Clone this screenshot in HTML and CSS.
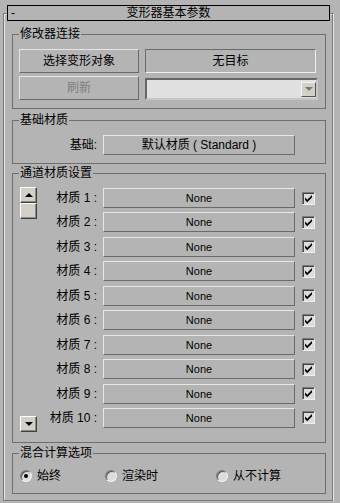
FILE: index.html
```html
<!DOCTYPE html>
<html lang="zh-CN">
<head>
  <meta charset="UTF-8" />
  <meta name="viewport" content="width=device-width, initial-scale=1.0"/>
  <title>变形器基本参数</title>
  <link rel="stylesheet" href="styles.css">
</head>
<body>
  <div class="rollout">
    <div class="rollout-head">
      <span class="minus">-</span>
      <span class="rollout-title">变形器基本参数</span>
      <span></span>
    </div>

    <!-- 修改器连接 -->
    <fieldset class="group group-link">
      <legend>修改器连接</legend>
      <div class="link-grid">
        <button class="btn">选择变形对象</button>
        <button class="btn btn-pick">无目标</button>
        <button class="btn" disabled>刷新</button>
        <div class="dropdown">
          <span class="drop-arrow"><span class="tri tri-down tri-gray"></span></span>
        </div>
      </div>
    </fieldset>

    <!-- 基础材质 -->
    <fieldset class="group group-base">
      <legend>基础材质</legend>
      <div class="base-row">
        <span class="base-label">基础:</span>
        <button class="btn btn-mat">默认材质 ( Standard )</button>
      </div>
    </fieldset>

    <!-- 通道材质设置 -->
    <fieldset class="group group-chan">
      <legend>通道材质设置</legend>
      <div class="chan">
        <div class="scroll">
          <div class="scroll-top">
            <button class="sbtn"><span class="tri tri-up"></span></button>
            <button class="sbtn"></button>
          </div>
          <button class="sbtn"><span class="tri tri-down"></span></button>
        </div>
        <div class="rows" id="rows"></div>
      </div>
    </fieldset>

    <!-- 混合计算选项 -->
    <fieldset class="group group-blend">
      <legend>混合计算选项</legend>
      <div class="blend">
        <label class="radio-item"><span class="radio on"><span class="dot"></span></span>始终</label>
        <label class="radio-item"><span class="radio"></span>渲染时</label>
        <label class="radio-item"><span class="radio"></span>从不计算</label>
      </div>
    </fieldset>
  </div>

  <script>
    // build the 10 channel rows
    const rows = document.getElementById("rows");
    let html = "";
    for (let i = 1; i <= 10; i++) {
      html += `<div class="row">
        <span class="row-label">材质 ${i} :</span>
        <button class="btn btn-none">None</button>
        <span class="check"><svg width="9" height="9" viewBox="0 0 9 9"><path d="M1 3.5 L3.2 5.7 L8 1 L8 3.6 L3.2 8.3 L1 6.1 Z" fill="#000"/></svg></span>
      </div>`;
    }
    rows.innerHTML = html;
  </script>
</body>
</html>
```

FILE: styles.css
```css
body {
  margin: 0;
  background-color: #b4b4b4;
  font-family: "Liberation Sans", "Noto Sans CJK SC", sans-serif;
  font-size: 12px;
  line-height: 14px;
  color: #000;
}
.rollout {
  width: 328px;
  margin: 13px 0 0 3px;
  padding-bottom: 6px;
  border: 1px solid #7a7a7a;
  box-shadow: inset 1px 1px 0 #e4e4e4, 1px 1px 0 #e4e4e4;
}
.rollout-head {
  display: grid;
  grid-template-columns: 1fr auto 1fr;
  align-items: center;
  height: 14px;
  margin: -9px 2px 0 3px;
  border: 1px solid #000;
  background-color: #b4b4b4;
}
.minus {
  padding-left: 3px;
}
.group {
  margin: 0 6px 0 8px;
  padding: 7px 7px 8px 6px;
  border: 1px solid #6e6e6e;
  min-width: 0;
}
.group legend {
  padding: 0 1px;
  line-height: 15px;
}
.group-link {
  margin-top: 6px;
}
.group-base {
  margin-top: 4px;
}
.group-chan {
  margin-top: 2px;
  padding-bottom: 14px;
}
.group-blend {
  margin-top: 3px;
  padding-top: 8px;
  padding-bottom: 10px;
}

/* buttons */
.btn {
  box-sizing: border-box;
  margin: 0;
  padding: 0;
  font: inherit;
  color: #000;
  background-color: #b4b4b4;
  border: 1px solid;
  border-color: #e6e6e6 #6a6a6a #6a6a6a #e6e6e6;
}
.btn:disabled {
  color: #7e7e7e;
}
.btn-pick {
  border-color: #6a6a6a #f0f0f0 #f0f0f0 #6a6a6a;
}
.link-grid {
  display: grid;
  grid-template-columns: 120px 171px;
  grid-template-rows: 24px 24px;
  column-gap: 6px;
  row-gap: 3px;
}
.dropdown {
  box-sizing: border-box;
  align-self: end;
  width: 173px;
  height: 22px;
  display: flex;
  justify-content: flex-end;
  align-items: center;
  padding-right: 0;
  border: 2px solid;
  border-color: #666 #c6c6c6 #c6c6c6 #666;
  background-color: #e0e0e0;
}
.drop-arrow {
  box-sizing: border-box;
  width: 15px;
  height: 15px;
  display: flex;
  justify-content: center;
  align-items: center;
  border: 1px solid;
  border-color: #f4f4f4 #555 #555 #f4f4f4;
  background-color: #d4d0c8;
}

/* base material */
.base-row {
  display: flex;
  align-items: center;
}
.base-label {
  width: 78px;
  margin-right: 6px;
  text-align: right;
}
.btn-mat {
  width: 192px;
  height: 20px;
}

/* channel rows */
.chan {
  display: flex;
}
.scroll {
  width: 17px;
  margin: -1px 0 -4px 1px;
  display: flex;
  flex-direction: column;
  justify-content: space-between;
}
.sbtn {
  box-sizing: border-box;
  display: flex;
  justify-content: center;
  align-items: center;
  width: 17px;
  height: 16px;
  margin: 0;
  padding: 0;
  border: 1px solid;
  border-color: #fff #404040 #404040 #fff;
  box-shadow: inset -1px -1px 0 #8a8a8a;
  background-color: #d4d0c8;
}
.tri {
  width: 0;
  height: 0;
  border-left: 4px solid transparent;
  border-right: 4px solid transparent;
}
.tri-up {
  border-bottom: 4px solid #000;
}
.tri-down {
  border-top: 4px solid #000;
}
.tri-gray {
  border-top-color: #777;
}
.rows {
  display: flex;
  flex-direction: column;
  gap: 4.45px;
}
.row {
  display: flex;
  align-items: center;
  height: 20px;
}
.row-label {
  width: 60px;
  margin-right: 6px;
  text-align: right;
  white-space: pre;
}
.btn-none {
  width: 192px;
  height: 20px;
  font-size: 11px;
}
.check {
  box-sizing: border-box;
  display: flex;
  justify-content: center;
  align-items: center;
  width: 13px;
  height: 13px;
  margin-left: 7px;
  border: 1px solid;
  border-color: #7a7a7a #eeeeee #eeeeee #7a7a7a;
  box-shadow: inset 1px 1px 0 #444;
  background-color: #dcdcdc;
}

/* blend radios */
.blend {
  display: grid;
  grid-template-columns: 85px 111px 1fr;
  height: 14px;
  padding-left: 1px;
}
.radio-item {
  display: flex;
  align-items: center;
  gap: 5px;
}
.radio {
  box-sizing: border-box;
  display: flex;
  justify-content: center;
  align-items: center;
  width: 12px;
  height: 12px;
  border-radius: 50%;
  border: 1px solid;
  border-color: #7a7a7a #f2f2f2 #f2f2f2 #7a7a7a;
  box-shadow: inset 1px 1px 0 #555;
  background-color: #dcdcdc;
}
.dot {
  width: 4px;
  height: 4px;
  border-radius: 50%;
  background-color: #000;
}
```
